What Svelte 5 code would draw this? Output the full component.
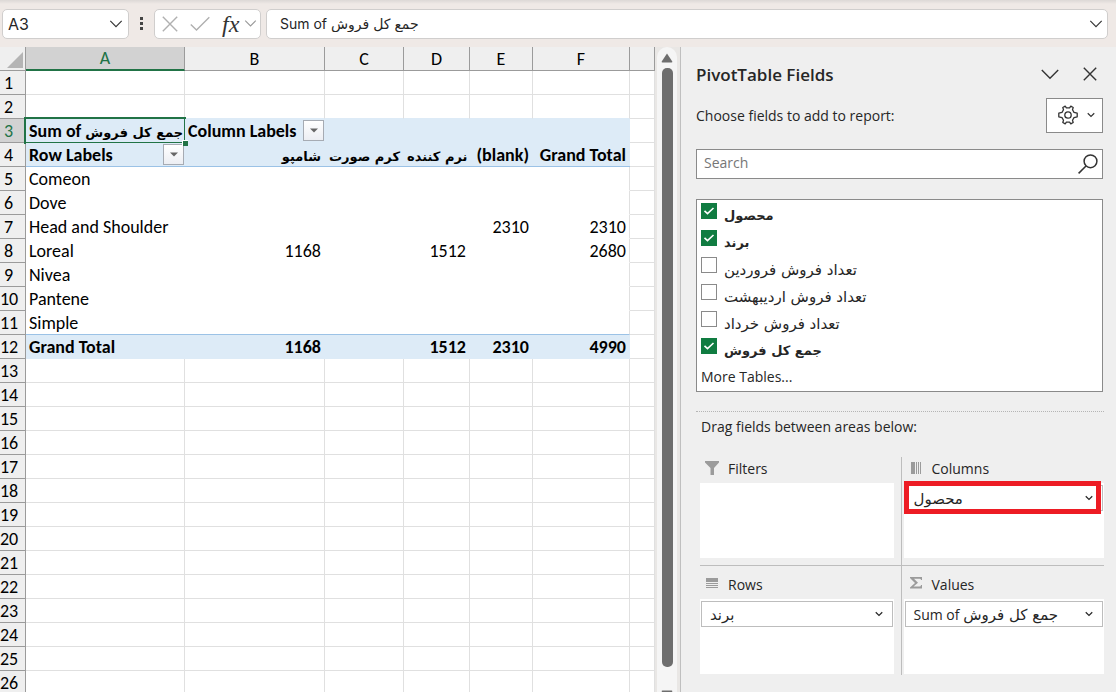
<script>
  let columns = [
    { name: "A", width: 159 },
    { name: "B", width: 140 },
    { name: "C", width: 79 },
    { name: "D", width: 66 },
    { name: "E", width: 63 },
    { name: "F", width: 97 },
    { name: "", width: 25 },
  ];

  // pivot table content, keyed by sheet row
  let data = {
    3: ["Sum of جمع کل فروش", "Column Labels"],
    4: ["Row Labels", "شامپو", "کرم صورت", "نرم کننده", "(blank)", "Grand Total"],
    5: ["Comeon"],
    6: ["Dove"],
    7: ["Head and Shoulder", "", "", "", "2310", "2310"],
    8: ["Loreal", "1168", "", "1512", "", "2680"],
    9: ["Nivea"],
    10: ["Pantene"],
    11: ["Simple"],
    12: ["Grand Total", "1168", "", "1512", "2310", "4990"],
  };

  let rows = [];
  for (let n = 1; n <= 26; n++) {
    rows.push({ n, cells: columns.map((c, i) => (data[n] && data[n][i]) || "") });
  }

  let fields = [
    { name: "محصول", checked: true },
    { name: "برند", checked: true },
    { name: "تعداد فروش فروردین", checked: false },
    { name: "تعداد فروش اردیبهشت", checked: false },
    { name: "تعداد فروش خرداد", checked: false },
    { name: "جمع کل فروش", checked: true },
  ];

  let areas = [
    { name: "Filters", icon: "filter", item: "" },
    { name: "Columns", icon: "columns", item: "محصول", marked: true },
    { name: "Rows", icon: "rows", item: "برند" },
    { name: "Values", icon: "sigma", item: "Sum of جمع کل فروش" },
  ];

  let cellName = "A3";
  let formula = "Sum of جمع کل فروش";
  let search = "";

  function parts(text) {
    return text.split(/([\u0600-\u06FF][\u0600-\u06FF ]*)/).filter((p) => p != "");
  }
</script>

{#snippet mixed(text)}
  {#each parts(text) as part}{#if /[\u0600-\u06FF]/.test(part)}<span class="fa" lang="fa">{part}</span>{:else}{part}{/if}{/each}
{/snippet}

{#snippet chevron(size)}
  <svg width={size} height={size} viewBox="0 0 16 16" fill="none" stroke="currentColor" stroke-width={size > 12 ? 1.3 : 2.4}>
    <path d="M1.5 4.5 8 11l6.5-6.5" />
  </svg>
{/snippet}

<div class="app">
  <header class="formula-bar">
    <div class="box name-box">
      <input aria-label="Name box" bind:value={cellName} />
      <button aria-label="Show names">{@render chevron(14)}</button>
    </div>
    <svg class="dots" width="5" height="14" viewBox="0 0 5 14" fill="#444">
      <rect x="1" y="0" width="3" height="3" /><rect x="1" y="5" width="3" height="3" /><rect x="1" y="10" width="3" height="3" />
    </svg>
    <div class="box fx-box">
      <button aria-label="Cancel">
        <svg width="16" height="16" viewBox="0 0 16 16" fill="none" stroke="#b0b0b0" stroke-width="1.4"><path d="M.8.8l14.4 14.4M15.2.8.8 15.2" /></svg>
      </button>
      <button aria-label="Enter">
        <svg width="20" height="16" viewBox="0 0 20 16" fill="none" stroke="#b0b0b0" stroke-width="1.4"><path d="M.8 8.5 6.5 14 19.3 1.2" /></svg>
      </button>
      <button class="fx" aria-label="Insert function">fx</button>
      <button class="fx-more" aria-label="Functions">{@render chevron(13)}</button>
    </div>
    <div class="box formula">
      <input aria-label="Formula" bind:value={formula} />
      <button aria-label="Expand formula bar">{@render chevron(14)}</button>
    </div>
  </header>

  <div class="body">
    <div class="sheet">
      <table>
        <colgroup>
          <col class="numbers" />
          {#each columns as col}
            <col style="width: {col.width}px" />
          {/each}
        </colgroup>
        <thead>
          <tr>
            <th class="corner" aria-label="Select all">
              <svg width="16" height="16" viewBox="0 0 16 16"><path d="M16 0v16H0z" fill="#b4b4b4" /></svg>
            </th>
            {#each columns as col, i}
              <th class:active={i == 0}>{col.name}</th>
            {/each}
          </tr>
        </thead>
        <tbody>
          {#each rows as row}
            <tr>
              <th class:active={row.n == 3}>{row.n}</th>
              {#each row.cells as text, i}
                <td
                  class:pivot={row.n > 2 && row.n < 13 && i < 6}
                  class:head={(row.n == 3 || row.n == 4 || row.n == 12) && i < 6}
                  class:above={row.n == 2 && i < 6}
                  class:rule={(row.n == 4 || row.n == 11) && i < 6}
                  class:last={i == 5 && row.n > 4 && row.n < 12}
                  class:value={i > 0 && row.n > 3}
                  class:selected={row.n == 3 && i == 0}
                >
                  {@render mixed(text)}
                  {#if text == "Column Labels" || text == "Row Labels"}
                    <button class="drop" aria-label={text}>
                      <svg width="8" height="5" viewBox="0 0 8 5"><path d="M0 .5h8L4 4.5z" fill="#666" /></svg>
                    </button>
                  {/if}
                </td>
              {/each}
            </tr>
          {/each}
        </tbody>
      </table>
    </div>

    <div class="scroll">
      <div class="track">
        <svg width="12" height="10" viewBox="0 0 12 10"><path d="M6 .5 11.3 8.6q.2.9-.7.9H1.4q-.9 0-.7-.9z" fill="#6e6e6e" /></svg>
        <div class="thumb"></div>
        <svg width="12" height="10" viewBox="0 0 12 10"><path d="M6 9.5.7 1.4Q.5.5 1.4.5h9.2q.9 0 .7.9z" fill="#6e6e6e" /></svg>
      </div>
    </div>

    <aside class="panel">
      <div class="title">
        <h2>PivotTable Fields</h2>
        <button aria-label="Task pane options">
          <svg width="18" height="18" viewBox="0 0 18 18" fill="none" stroke="#333" stroke-width="1.4"><path d="M.8 5 9 13.2 17.2 5" /></svg>
        </button>
        <button aria-label="Close">
          <svg width="14" height="14" viewBox="0 0 14 14" fill="none" stroke="#333" stroke-width="1.4"><path d="M.8.8l12.4 12.4M13.2.8.8 13.2" /></svg>
        </button>
      </div>

      <div class="choose">
        <span>Choose fields to add to report:</span>
        <button class="tools" aria-label="Tools">
          <svg width="20" height="20" viewBox="0 0 20 20" fill="none" stroke="#333" stroke-width="1.3" stroke-linejoin="round">
            <path d="M7.2 1.1 8.4 2.9h3.2l1.2-1.8 2.4 1.4-.7 2.2 1.5 2.7 3.2.8v3.6l-3.2.8-1.5 2.7.7 2.2-2.4 1.4-1.2-1.8H8.4l-1.2 1.8-2.4-1.4.7-2.2L4 12.6l-3.2-.8V8.2L4 7.4l1.5-2.7-.7-2.2z" />
            <circle cx="10" cy="10" r="3.2" />
          </svg>
          {@render chevron(8)}
        </button>
      </div>

      <div class="search">
        <input type="text" placeholder="Search" aria-label="Search fields" bind:value={search} />
        <svg width="20" height="20" viewBox="0 0 20 20" fill="none" stroke="#333" stroke-width="1.5"><circle cx="12.5" cy="7.3" r="6.4" /><path d="M8 12 .6 19.4" /></svg>
      </div>

      <div class="fields">
        {#each fields as field}
          <label class:checked={field.checked}>
            <input type="checkbox" bind:checked={field.checked} />
            {@render mixed(field.name)}
          </label>
        {/each}
        <a href="#more">More Tables...</a>
      </div>

      <p class="drag">Drag fields between areas below:</p>

      <div class="areas">
        {#each areas as area}
          <section>
            <h3>
              <svg width="15" height="15" viewBox="0 0 15 15" fill="#9b9b9b">
                {#if area.icon == "filter"}
                  <path d="M0 0h14v1.5L9 7v7H5.500V7L0 1.500z" />
                {:else if area.icon == "columns"}
                  <path d="M2 1h4v12H2zM7 1h1v12H7zM9 1h1v12H9zM11 1h1v12h-1z" />
                {:else if area.icon == "rows"}
                  <path d="M1 1h12v4H1zM1 6h12v1H1zM1 8h12v1H1zM1 10h12v1H1z" />
                {:else}
                  <path d="M1 0h12v3h-1q0-1.200-1.500-1.200H5L9 5.800 4.500 9.500h6Q12 9.500 12 8h1v3.500H1v-1L6 6 1 1z" />
                {/if}
              </svg>
              {area.name}
            </h3>
            <div class="zone">
              {#if area.item}
                <button class="item" class:marked={area.marked}>
                  <span>{@render mixed(area.item)}</span>
                  {@render chevron(8)}
                </button>
              {/if}
            </div>
          </section>
        {/each}
      </div>
    </aside>
  </div>
</div>

<style>
  :global(body) {
    background: #efefef;
  }
  .app {
    display: flex;
    flex-direction: column;
    height: 100vh;
    overflow: hidden;
    color: #262626;
    font-family: "Open Sans", "DejaVu Sans", sans-serif;
    font-size: 14px;
  }
  .app :global(svg) {
    display: block;
    flex: none;
  }
  button {
    display: flex;
    align-items: center;
    justify-content: center;
    padding: 0;
    border: 0;
    background: none;
    color: #333;
    font: inherit;
  }
  input {
    font: inherit;
    color: inherit;
  }
  .fa {
    font-family: "DejaVu Sans", sans-serif;
    font-size: 15px;
    line-height: 16px;
  }

  .formula-bar {
    display: flex;
    align-items: center;
    box-sizing: border-box;
    height: 47px;
    padding: 0 8px 0 2px;
    background: linear-gradient(#dcd8d6, #efe9e6 4px);
    font-family: "Inter", "DejaVu Sans", sans-serif;
    font-size: 16px;
  }
  .box {
    display: flex;
    align-items: center;
    box-sizing: border-box;
    height: 30px;
    border: 1px solid #d0cecd;
    border-radius: 5px;
    background: #fff;
  }
  .box input {
    flex: 1;
    min-width: 0;
    padding: 0;
    border: 0;
    background: none;
    outline: none;
  }
  .name-box {
    width: 127px;
    padding: 0 5px;
  }
  .dots {
    margin: 0 10px;
  }
  .fx-box {
    gap: 12px;
    width: 107px;
    padding: 0 2px 0 7px;
  }
  .fx {
    font-family: "Liberation Serif", serif;
    font-size: 24px;
    font-style: italic;
    line-height: 24px;
  }
  .fx-more {
    margin-left: -7px;
    color: #999;
  }
  .formula {
    flex: 1;
    margin-left: 5px;
    padding: 0 4px 0 13px;
    font-size: 14px;
  }

  .body {
    display: flex;
    flex: 1;
    min-height: 0;
  }
  .sheet {
    flex: none;
    overflow: hidden;
    background: #fff;
    color: #000;
    font-family: "Carlito", "Lato", sans-serif;
    font-size: 18px;
  }
  .sheet .fa {
    font-size: 13px;
  }
  table {
    width: 655px;
    border-spacing: 0;
    table-layout: fixed;
  }
  .numbers {
    width: 26px;
  }
  th,
  td {
    box-sizing: border-box;
    height: 24px;
    padding: 0;
    line-height: 20px;
    white-space: nowrap;
  }
  th {
    border-right: 1px solid #9b9b9b;
    border-bottom: 1px solid #9b9b9b;
    background: #efefef;
    font-weight: 400;
  }
  tbody th {
    padding-right: 8px;
  }
  th.active {
    background: #d2d2d2;
    color: #217346;
  }
  thead th.active {
    border-bottom: 2px solid #217346;
  }
  .corner svg {
    margin: 2px 0 0 7px;
  }
  td {
    position: relative;
    padding: 0 4px 0 3px;
    border-right: 1px solid #e0e0e0;
    border-bottom: 1px solid #e0e0e0;
  }
  td.pivot {
    border-right: 0;
    border-bottom-color: transparent;
  }
  td.pivot.last {
    padding-right: 3px;
    border-right: 1px solid #e0e0e0;
  }
  td.head {
    border-bottom-color: #ddebf7;
    background: #ddebf7;
    font-weight: 700;
  }
  td.above {
    border-bottom-color: #ddebf7;
  }
  td.rule,
  td.head.rule {
    border-bottom-color: #9bc2e6;
  }
  td.value {
    text-align: right;
  }
  td.selected::before {
    content: "";
    position: absolute;
    inset: -2px -1px -2px -2px;
    border: 2px solid #217346;
  }
  td.selected::after {
    content: "";
    position: absolute;
    right: -3px;
    bottom: -4px;
    z-index: 1;
    width: 5px;
    height: 5px;
    border: 1px solid #fff;
    border-width: 1px 0 0 1px;
    background: #217346;
  }
  .drop {
    position: absolute;
    top: 1px;
    right: 1px;
    width: 21px;
    height: 21px;
    border: 1px solid #a6abb3;
    background: linear-gradient(#fff, #eceef3);
  }

  .scroll {
    flex: none;
    box-sizing: border-box;
    width: 26px;
    padding: 0 3px 0 2px;
    border-right: 1px solid #bfbfbf;
    background: #e9e7e5;
  }
  .track {
    display: flex;
    flex-direction: column;
    align-items: center;
    gap: 11px;
    box-sizing: border-box;
    height: 100%;
    padding-top: 6px;
    border-radius: 10px 10px 0 0;
    background: #f5f5f5;
  }
  .track svg:last-child {
    margin: 12px 0 -8px;
  }
  .track svg:first-child {
    margin-bottom: -6px;
  }
  .thumb {
    flex: 1;
    width: 11px;
    border-radius: 5px;
    background: #6e6e6e;
  }

  .panel {
    flex: 1;
    min-width: 0;
    padding: 14px 12px 0 15px;
    background: #efefef;
  }
  .title {
    display: flex;
    align-items: center;
    gap: 24px;
    height: 26px;
    padding-right: 7px;
  }
  h2 {
    flex: 1;
    margin: 0;
    font-size: 17px;
    font-weight: 600;
  }
  .choose {
    display: flex;
    align-items: center;
    justify-content: space-between;
    height: 36px;
    margin-top: 10px;
    padding-right: 1px;
  }
  .tools {
    gap: 9px;
    box-sizing: border-box;
    width: 57px;
    height: 35px;
    padding-left: 4px;
    border: 1px solid #8a8a8a;
    background: #fff;
  }
  .search {
    display: flex;
    align-items: center;
    box-sizing: border-box;
    height: 30px;
    margin: 16px 1px 0 0;
    padding: 0 4px 0 7px;
    border: 1px solid #8a8a8a;
    background: #fff;
  }
  .search input {
    flex: 1;
    min-width: 0;
    padding: 0 0 3px;
    border: 0;
    outline: none;
    background: none;
  }
  .search input::placeholder {
    color: #767676;
  }
  .fields {
    display: flex;
    flex-direction: column;
    box-sizing: border-box;
    height: 193px;
    margin: 20px 1px 0 0;
    padding: 2px 4px 0;
    border: 1px solid #8a8a8a;
    background: #fff;
  }
  .fields label {
    display: flex;
    flex: none;
    align-items: center;
    gap: 7px;
    height: 27px;
  }
  .fields label.checked {
    font-weight: 700;
  }
  .fields .checked .fa {
    font-size: 13px;
  }
  .fields input {
    appearance: none;
    flex: none;
    width: 16px;
    height: 16px;
    margin: 0 0 10px;
    border: 1px solid #8a8a8a;
    background: #fff;
  }
  .fields input:checked {
    border-color: #107c41;
    background: #107c41 url("data:image/svg+xml,%3Csvg xmlns='http://www.w3.org/2000/svg' viewBox='0 0 14 14'%3E%3Cpath d='M2.500 6.800 5.500 9.600 11.500 4' fill='none' stroke='white' stroke-width='1.600'/%3E%3C/svg%3E") center no-repeat;
  }
  .fields a {
    color: inherit;
    line-height: 26px;
    text-decoration: none;
  }
  .drag {
    margin: 19px 0 0;
    padding: 5px 5px 0;
    border-top: 1px dotted #b5b5b5;
    line-height: 20px;
  }
  .areas {
    display: grid;
    grid-template-columns: 202fr 203fr;
    margin: 20px 0 0 4px;
  }
  section {
    box-sizing: border-box;
    height: 109px;
    padding-right: 7px;
    border-right: 1px solid #bdbdbd;
  }
  section:nth-child(even) {
    padding: 0 0 0 2px;
    border-right: 0;
  }
  section:nth-child(-n + 2) {
    border-bottom: 1px solid #bdbdbd;
  }
  h3 {
    display: flex;
    align-items: center;
    gap: 8px;
    height: 22px;
    margin: 0;
    padding: 0 5px 4px;
    font-size: 14px;
    font-weight: 400;
  }
  section:nth-child(n + 3) h3 {
    padding: 7px 5px 4px;
  }
  .zone {
    box-sizing: border-box;
    height: 75px;
    padding: 2px 1px;
    background: #fff;
  }
  .item {
    position: relative;
    justify-content: space-between;
    box-sizing: border-box;
    width: 100%;
    height: 26px;
    padding: 0 9px 0 8px;
    border: 1px solid #bdbdbd;
    background: #fff;
    color: #262626;
  }
  .item.marked::after {
    content: "";
    position: absolute;
    inset: -5px 1px -4px -2px;
    border: 5px solid #ed1c24;
  }
</style>
